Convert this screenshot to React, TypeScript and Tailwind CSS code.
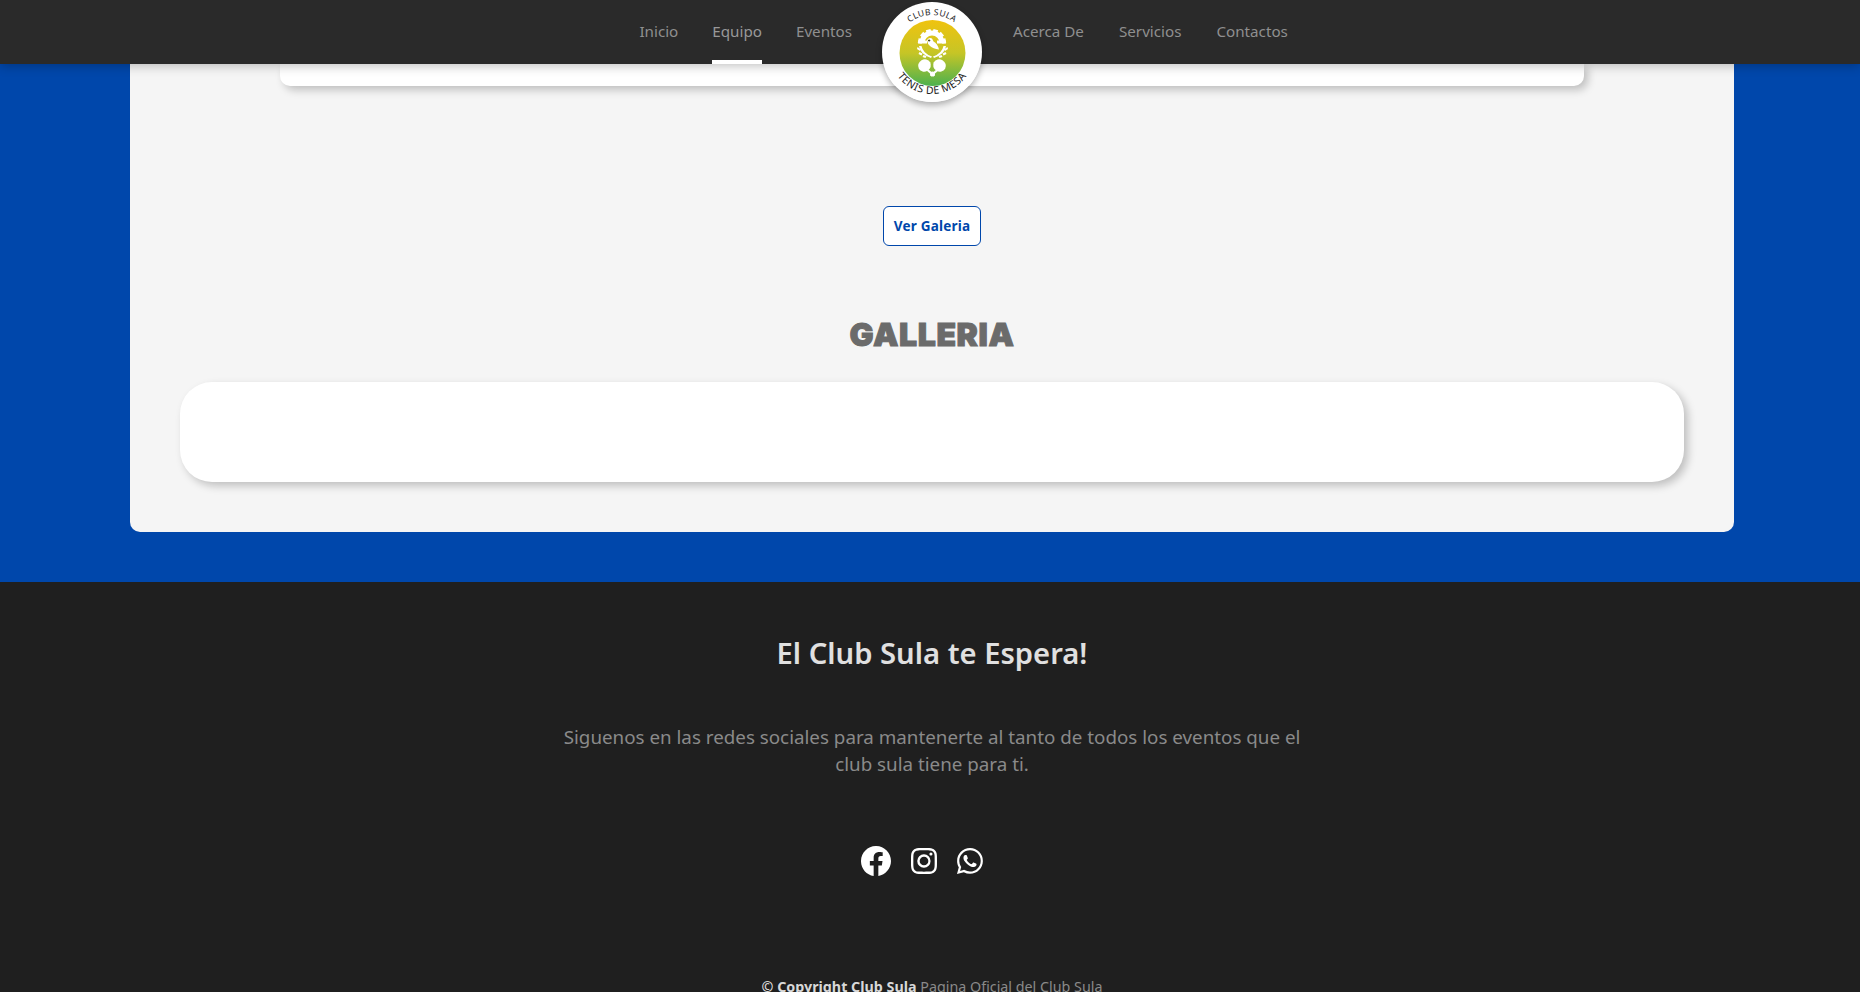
import { BsFacebook, BsInstagram, BsWhatsapp } from "react-icons/bs";

const gearTeeth = [-80, -48, -16, 16, 48, 80];

function Logo() {
  return (
    <svg viewBox="0 0 100 100" className="w-[100px] h-[100px]">
      <defs>
        <linearGradient id="logoFill" x1="0" y1="0" x2="0" y2="1">
          <stop offset="0" stopColor="#f0c30f" />
          <stop offset="0.5" stopColor="#c6c526" />
          <stop offset="1" stopColor="#4cb14f" />
        </linearGradient>
        <path id="logoTop" d="M 13 50 A 37 37 0 0 1 87 50" />
        <path id="logoBottom" d="M 8 50 A 42 42 0 0 0 92 50" />
      </defs>
      <circle cx="50" cy="50" r="50" fill="#ffffff" />
      <circle cx="50.5" cy="51" r="33" fill="url(#logoFill)" />
      <text fontFamily="'Noto Sans', sans-serif" fontSize="8.5" fill="#222222" letterSpacing="0.4">
        <textPath href="#logoTop" startOffset="50%" textAnchor="middle">CLUB SULA</textPath>
      </text>
      <text fontFamily="'Noto Sans', sans-serif" fontSize="10.5" fill="#222222" letterSpacing="0.4">
        <textPath href="#logoBottom" startOffset="50%" textAnchor="middle">TENIS DE MESA</textPath>
      </text>
      {/* gear */}
      <path d="M40 41 A10 10 0 0 1 60 41" fill="none" stroke="#ffffff" strokeWidth="5" />
      {gearTeeth.map((a) => (
        <rect key={a} x="47.6" y="27" width="4.8" height="4" fill="#ffffff" transform={`rotate(${a} 50 41)`} />
      ))}
      <rect x="36" y="38.5" width="9" height="3" fill="#ffffff" />
      <rect x="55" y="38.5" width="9" height="3" fill="#ffffff" />
      {/* bird */}
      <path d="M45 38 q2 -3 5 -1.5 l1.5 3 q4 2 5.5 8 q-6 -1 -9 -3.5 q-2.5 -2 -3 -6 z" fill="#ffffff" />
      <path d="M46 38 q1.5 -1 2.5 .5 q-1 1.5 -2.5 .5 z" fill="#4a4a2a" />
      {/* laurels */}
      <path d="M37 44 q1 8 12 12 l1 -1.5 q-9 -3 -10.5 -10.5 z M64 44 q-1 8 -12 12 l-1 -1.5 q9 -3 10.5 -10.5 z" fill="#ffffff" />
      <path d="M35.5 45 l3 2 -.5 2 -3 -2 z M37.5 50 l3 1.5 -1 2 -3 -1.5 z M41.5 53 l3 1 -1 2 -3 -1 z M65.5 45 l-3 2 .5 2 3 -2 z M63.5 50 l-3 1.5 1 2 3 -1.5 z M59.5 53 l-3 1 1 2 3 -1 z" fill="#ffffff" />
      {/* paddles */}
      <ellipse cx="42.5" cy="63.5" rx="6.5" ry="6" fill="#ffffff" transform="rotate(-30 42.5 63.5)" />
      <ellipse cx="57.5" cy="63.5" rx="6.5" ry="6" fill="#ffffff" transform="rotate(30 57.5 63.5)" />
      <path d="M46 67 l7 6 -1.5 1.5 -7 -6 z M55 67 l-7 6 1.5 1.5 7 -6 z" fill="#ffffff" />
      <circle cx="50.5" cy="72" r="2.5" fill="#ffffff" />
    </svg>
  );
}

const leftLinks = ["Inicio", "Equipo", "Eventos"];
const rightLinks = ["Acerca De", "Servicios", "Contactos"];

function NavLink({ label }: { label: string }) {
  const active = label === "Equipo";
  return (
    <a
      href="#"
      className={
        active
          ? "flex items-center h-16 pt-0.5 border-b-4 border-white text-[#989898] text-[15.2px]"
          : "flex items-center h-16 pt-0.5 border-b-4 border-transparent text-[#8f8f8f] text-[15.2px]"
      }
    >
      {label}
    </a>
  );
}

export default function App() {
  return (
    <div className="relative h-[992px] overflow-hidden bg-[#1f1f1f] font-['Noto_Sans',sans-serif]">
      <header className="relative z-20 grid grid-cols-[1fr_100px_1fr] gap-[30px] h-16 pl-1 bg-[#2a2a2a] shadow-[0_2px_10px_rgba(0,0,0,0.25)]">
        <nav className="flex justify-end gap-[34px]">
          {leftLinks.map((l) => (
            <NavLink key={l} label={l} />
          ))}
        </nav>
        <div className="relative">
          <div className="absolute top-[2px] left-0 rounded-full shadow-[0_3px_6px_rgba(0,0,0,0.3)]">
            <Logo />
          </div>
        </div>
        <nav className="flex justify-start gap-[35px] pl-px">
          {rightLinks.map((l) => (
            <NavLink key={l} label={l} />
          ))}
        </nav>
      </header>

      <section className="bg-[#0047ab] h-[518px] pl-[130px] pr-[126px]">
        <div className="flex flex-col items-center h-[468px] bg-[#f5f5f5] rounded-b-[10px]">
          <div className="w-[1304px] h-[22px] bg-white rounded-b-[10px] shadow-[4px_4px_8px_rgba(0,0,0,0.22)]" />
          <button className="mt-[120px] w-[98px] h-10 bg-white border border-[#0047ab] rounded-md text-[#0047ab] text-[13.5px] font-bold tracking-[0.2px]">
            Ver Galeria
          </button>
          <h2 className="mt-[69px] h-10 text-[32px] leading-10 font-black tracking-[0.6px] text-[#6b6b6b] [-webkit-text-stroke:1px_#6b6b6b] font-['Inter',sans-serif]">
            GALLERIA
          </h2>
          <div className="mt-[27px] w-[1504px] h-[100px] bg-white rounded-[32px] shadow-[4px_4px_8px_rgba(0,0,0,0.22)]" />
        </div>
      </section>

      <footer className="flex flex-col items-center text-center pt-[52px] pl-1">
        <h3 className="text-[29.2px] leading-[38px] font-semibold text-[#e0e0e0]">El Club Sula te Espera!</h3>
        <p className="mt-[52px] w-[760px] text-[18.8px] leading-[27px] text-[#8a8a8a]">
          Siguenos en las redes sociales para mantenerte al tanto de todos los eventos que el club sula tiene para ti.
        </p>
        <div className="mt-[68px] mr-5 flex items-center gap-5 text-white">
          <BsFacebook className="w-[30px] h-[30px]" />
          <BsInstagram className="w-[26px] h-[26px]" />
          <BsWhatsapp className="w-[26px] h-[26px]" />
        </div>
        <p className="mt-[101px] text-[14.3px] leading-5 text-[#8a8a8a]">
          <strong className="font-bold text-[#d8d8d8]">© Copyright Club Sula</strong> Pagina Oficial del Club Sula
        </p>
      </footer>
    </div>
  );
}
